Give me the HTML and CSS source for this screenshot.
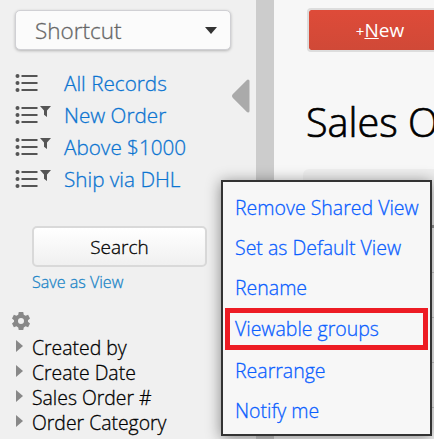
FILE: index.html
```html
<!DOCTYPE html>
<html lang="en">
<head>
    <meta charset="UTF-8">
    <meta name="viewport" content="width=device-width, initial-scale=1.0">
    <title>Sales Order</title>
    <link rel="stylesheet" href="styles.css">
</head>
<body>
    <svg class="symbols" aria-hidden="true">
        <symbol id="list" viewBox="0 0 22 18">
            <circle cx="2" cy="2" r="2"/><circle cx="2" cy="9" r="2"/><circle cx="2" cy="16" r="2"/>
            <path d="M6 1h16v2H6zM6 8h16v2H6zM6 15h16v2H6z"/>
        </symbol>
        <symbol id="funnel" viewBox="0 0 11 11">
            <path d="M0 0h11L7 4.500V11L4 8.800V4.500z"/>
        </symbol>
        <symbol id="gear" viewBox="0 0 24 24">
            <path fill-rule="evenodd" d="M9 0h6l.7 3.500 2.400 1.400L21.500 3.700l2.500 5-2.700 2.300v2l2.700 2.300-2.500 5-3.400-1.200-2.400 1.400L15 24H9l-.7-3.500-2.400-1.400-3.400 1.200-2.500-5L2.700 13v-2L0 8.700l2.500-5 3.400 1.200 2.400-1.400zM12 8a4 4 0 1 0 0 8 4 4 0 0 0 0-8z"/>
        </symbol>
    </svg>

    <div class="page">
        <aside class="sidebar">
            <button class="shortcut">Shortcut <span class="caret"></span></button>
            <ul class="views">
                <li><svg class="list-icon"><use href="#list"/></svg><a href="#">All Records</a></li>
                <li><svg class="list-icon"><use href="#list"/></svg><svg class="funnel-icon"><use href="#funnel"/></svg><a href="#">New Order</a></li>
                <li><svg class="list-icon"><use href="#list"/></svg><svg class="funnel-icon"><use href="#funnel"/></svg><a href="#">Above $1000</a></li>
                <li><svg class="list-icon"><use href="#list"/></svg><svg class="funnel-icon"><use href="#funnel"/></svg><a href="#">Ship via DHL</a></li>
            </ul>
            <button class="search">Search</button>
            <a class="save-view" href="#">Save as View</a>
            <svg class="gear-icon"><use href="#gear"/></svg>
            <ul class="filters">
                <li>Created by</li>
                <li>Create Date</li>
                <li>Sales Order #</li>
                <li>Order Category</li>
            </ul>
            <svg class="collapse" viewBox="0 0 19 34"><path d="M2 16L16 2v30L2 18q-1-1 0-2z"/></svg>
        </aside>
        <div class="divider"></div>
        <main class="content">
            <button class="new-button"><small>+</small><u>N</u>ew</button>
            <h1>Sales O</h1>
            <div class="table">
                <div class="table-head"></div>
                <div class="row"></div>
                <div class="row"></div>
                <div class="row"></div>
                <div class="row"></div>
            </div>
        </main>
    </div>

    <nav class="menu">
        <a href="#">Remove Shared View</a>
        <a href="#">Set as Default View</a>
        <a href="#">Rename</a>
        <a class="marked" href="#">Viewable groups</a>
        <a href="#">Rearrange</a>
        <a href="#">Notify me</a>
    </nav>
</body>
</html>
```

FILE: styles.css
```css
* {
    box-sizing: border-box;
}

body {
    margin: 0;
    height: 439px;
    overflow: hidden;
    background: #f7f7f7;
    color: #000;
    font-family: "Open Sans", sans-serif;
    font-weight: 300;
    -webkit-text-stroke: 0.3px;
}

button {
    font-family: inherit;
    font-weight: inherit;
    -webkit-text-stroke: inherit;
}

a {
    color: #0b74d1;
    text-decoration: none;
}

ul {
    list-style: none;
    margin: 0;
    padding: 0;
}

.symbols {
    display: none;
}

.page {
    display: flex;
    height: 439px;
}

.sidebar {
    position: relative;
    flex: 0 0 256px;
    padding: 10px 0 0 12px;
    background: #f0f0f0;
}

.shortcut {
    display: flex;
    align-items: center;
    justify-content: space-between;
    width: 216px;
    height: 40px;
    margin-left: 3px;
    padding: 0 13px 0 19px;
    background: #fbfbfb;
    border: 1px solid #d0d0d4;
    border-radius: 5px;
    box-shadow: 0 1px 3px rgba(0, 0, 0, 0.25);
    color: #666;
    font-size: 22.5px;
}

.caret {
    border: 6.5px solid transparent;
    border-top: 7px solid #333;
    border-bottom: 0;
}

.views {
    margin: 17px 0 0 3px;
    font-size: 20.7px;
}

.views li {
    display: flex;
    align-items: center;
    height: 32px;
}

.views a {
    margin-left: auto;
    width: 192px;
}

.list-icon {
    width: 23px;
    height: 18px;
    fill: #555;
}

.funnel-icon {
    width: 11px;
    height: 11px;
    margin: 0 0 8px 2px;
    fill: #555;
}

.search {
    display: block;
    width: 175px;
    height: 41px;
    margin: 31px 0 0 20px;
    padding: 0;
    background: linear-gradient(#fff, #f0f0f0);
    border: 2px solid #d9d9d9;
    border-radius: 5px;
    font-size: 19px;
}

.save-view {
    display: block;
    margin: 4px 0 0 20px;
    color: #2085c7;
    font-size: 16.1px;
    line-height: 22px;
}

.gear-icon {
    display: block;
    width: 18px;
    height: 18px;
    margin-top: 19px;
    fill: #888;
}

.filters {
    margin: 5px 0 0 4px;
    font-size: 19.4px;
}

.filters li {
    display: flex;
    align-items: center;
    height: 25px;
}

.filters li::before {
    content: "";
    margin: 0 9px 3px 0;
    border: 6.5px solid transparent;
    border-left: 7px solid #888;
    border-right: 0;
}

.collapse {
    position: absolute;
    top: 79px;
    right: 5px;
    width: 19px;
    height: 34px;
    fill: #aaa;
    stroke: #aaa;
    stroke-width: 3;
    stroke-linejoin: round;
}

.divider {
    flex: 0 0 18px;
    background: #ccc;
}

.content {
    flex: 1;
    padding: 8px 0 0 32px;
    overflow: hidden;
    white-space: nowrap;
}

.new-button {
    width: 150px;
    height: 44px;
    margin-left: 1px;
    padding: 0 4px 0 0;
    background: linear-gradient(#de4b39, #d04937);
    background-clip: padding-box;
    border: 2px solid #ddd;
    border-radius: 4px;
    color: #fff;
    font-size: 19px;
    font-weight: 400;
    -webkit-text-stroke: 0;
}

.new-button small {
    font-size: 15px;
}

h1 {
    margin: 43px 0 0;
    font-size: 39.6px;
    font-weight: 300;
    line-height: 54px;
    -webkit-text-stroke: 0.7px;
}

.table {
    margin: 20px 0 0 -3px;
}

.table-head {
    height: 59px;
    background: #efefef;
    border-bottom: 3px solid #999;
    border-radius: 6px 0 0 0;
}

.row {
    height: 45px;
    border-bottom: 1px solid #ccc;
}

.menu {
    position: absolute;
    top: 180px;
    left: 221px;
    width: 211px;
    height: 256px;
    padding: 5px 2px;
    background: #f7f7f7;
    border: 2px solid #333;
    box-shadow: 0 2px 14px rgba(0, 0, 0, 0.45);
    font-size: 19.5px;
}

.menu a {
    display: flex;
    align-items: center;
    height: 40.3px;
    padding-left: 10px;
    color: #0a5eff;
    white-space: nowrap;
}

.menu .marked {
    height: 42px;
    padding-left: 5px;
    border: 5px solid #ed1c24;
}
```
